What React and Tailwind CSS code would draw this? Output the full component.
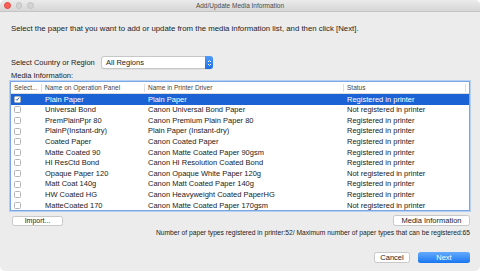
import React from "react";

const rows = [
  ["Plain Paper", "Plain Paper", "Registered in printer", true],
  ["Universal Bond", "Canon Universal Bond Paper", "Not registered in printer"],
  ["PremPlainPpr 80", "Canon Premium Plain Paper 80", "Registered in printer"],
  ["PlainP(Instant-dry)", "Plain Paper (Instant-dry)", "Registered in printer"],
  ["Coated Paper", "Canon Coated Paper", "Registered in printer"],
  ["Matte Coated 90", "Canon Matte Coated Paper 90gsm", "Registered in printer"],
  ["HI ResCtd Bond", "Canon HI Resolution Coated Bond", "Registered in printer"],
  ["Opaque Paper 120", "Canon Opaque White Paper 120g", "Not registered in printer"],
  ["Matt Coat 140g", "Canon Matt Coated Paper 140g", "Registered in printer"],
  ["HW Coated HG", "Canon Heavyweight Coated PaperHG", "Registered in printer"],
  ["MatteCoated 170", "Canon Matte Coated Paper 170gsm", "Not registered in printer"],
];

const Checkbox = ({ checked }) => (
  <div className="w-[7px] h-[7px] rounded-[1.5px] bg-white border border-[#b4b4b4] flex items-center justify-center">
    {checked && (
      <svg width="6" height="6" viewBox="0 0 6 6">
        <path d="M1 3.2 L2.4 4.6 L5 1.2" stroke="#1a65d6" strokeWidth="1.1" fill="none" />
      </svg>
    )}
  </div>
);

const App = () => {
  return (
    <div className="w-[480px] h-[273px] bg-white overflow-hidden" style={{ fontFamily: '"Liberation Sans", Arial, sans-serif' }}>
      <div className="h-[271px] bg-[#ececec] rounded-[5px] flex flex-col overflow-hidden">
        {/* title bar */}
        <div className="h-[12px] shrink-0 bg-gradient-to-b from-[#ebebeb] to-[#d6d6d6] border-b border-[#c4c4c4] flex items-center relative">
          <div className="flex gap-[5px] pl-[4px]">
            <div className="w-[6.5px] h-[6.5px] rounded-full bg-[#fc5f57] border border-[#e2463f]" />
            <div className="w-[6.5px] h-[6.5px] rounded-full bg-[#d3d3d3] border border-[#c2c2c2]" />
            <div className="w-[6.5px] h-[6.5px] rounded-full bg-[#d3d3d3] border border-[#c2c2c2]" />
          </div>
          <div className="absolute inset-0 flex items-center justify-center text-[6.5px] text-[#4b4b4b]">
            Add/Update Media Information
          </div>
        </div>

        <div className="flex flex-col px-[10px]">
          <div className="mt-[12px] pl-[1px] text-[7.8px] leading-[10px] text-[#1c1c1c] whitespace-nowrap">
            Select the paper that you want to add or update from the media information list, and then click [Next].
          </div>

          <div className="mt-[22px] flex items-center pl-[1px]">
            <span className="text-[7.5px] text-[#1c1c1c] w-[90px] whitespace-nowrap">Select Country or Region</span>
            <div className="w-[112px] h-[13px] bg-white border border-[#c6c6c6] rounded-[3px] flex items-center justify-between shadow-[0_0.5px_0.5px_rgba(0,0,0,0.1)]">
              <span className="pl-[4px] text-[7.5px] text-[#1c1c1c]">All Regions</span>
              <div className="w-[8px] h-[13px] -mr-px rounded-r-[3px] bg-gradient-to-b from-[#4f9bfa] to-[#1b6ee6] flex items-center justify-center">
                <svg width="5" height="8" viewBox="0 0 5 8">
                  <path d="M1 3 L2.5 1.5 L4 3 M1 5 L2.5 6.5 L4 5" stroke="white" strokeWidth="0.9" fill="none" />
                </svg>
              </div>
            </div>
          </div>

          <div className="mt-[2px] pl-[1px] text-[7.5px] leading-[9px] text-[#1c1c1c]">Media Information:</div>

          {/* table */}
          <div className="mt-[1px] h-[130px] bg-white border border-[#7aa6e3] shadow-[0_0_0_1px_#b5d0f2] overflow-hidden flex flex-col">
            <div className="h-[12px] shrink-0 flex items-center border-b border-[#dcdcdc] text-[6.5px] text-[#444]">
              <div className="w-[31px] pl-[3px] border-r border-[#dedede] h-[8px] flex items-center">Select...</div>
              <div className="w-[103px] pl-[3px] border-r border-[#dedede] h-[8px] flex items-center">Name on Operation Panel</div>
              <div className="w-[199px] pl-[3px] border-r border-[#dedede] h-[8px] flex items-center">Name in Printer Driver</div>
              <div className="w-[122px] pl-[3px] border-r border-[#dedede] h-[8px] flex items-center">Status</div>
            </div>
            {rows.map(([panel, driver, status, sel], i) => (
              <div
                key={i}
                className={`h-[10.6px] shrink-0 flex items-center text-[7.5px] ${sel ? "bg-[#1b63d4] text-white" : "text-[#1a1a1a]"}`}
              >
                <div className="w-[31px] pl-[3px] flex items-center">
                  <Checkbox checked={sel} />
                </div>
                <div className="w-[103px] pl-[3px] whitespace-nowrap">{panel}</div>
                <div className="w-[199px] pl-[3px] whitespace-nowrap">{driver}</div>
                <div className="w-[122px] pl-[3px] whitespace-nowrap">{status}</div>
              </div>
            ))}
          </div>

          <div className="mt-[4px] flex items-center justify-between">
            <button className="ml-[2px] w-[51px] h-[10px] bg-white border border-[#c8c8c8] rounded-[2.5px] text-[7px] text-[#1c1c1c] leading-none">
              Import...
            </button>
            <button className="w-[77px] h-[11px] bg-white border border-[#c8c8c8] rounded-[2.5px] text-[7.5px] text-[#1c1c1c] leading-none">
              Media Information
            </button>
          </div>

          <div className="mt-[2px] text-right text-[6.7px] leading-[9px] text-[#1c1c1c] whitespace-nowrap">
            Number of paper types registered in printer:52/ Maximum number of paper types that can be registered:65
          </div>

          <div className="mt-[15px] flex justify-end gap-[8px]">
            <button className="w-[36px] h-[11px] bg-white border border-[#c8c8c8] rounded-[2.5px] text-[7.5px] text-[#1c1c1c] leading-none">
              Cancel
            </button>
            <button className="w-[52px] h-[11px] rounded-[2.5px] bg-gradient-to-b from-[#62aafc] to-[#1575f1] text-[7.5px] text-white leading-none">
              Next
            </button>
          </div>
        </div>
      </div>
    </div>
  );
};

export default App;
